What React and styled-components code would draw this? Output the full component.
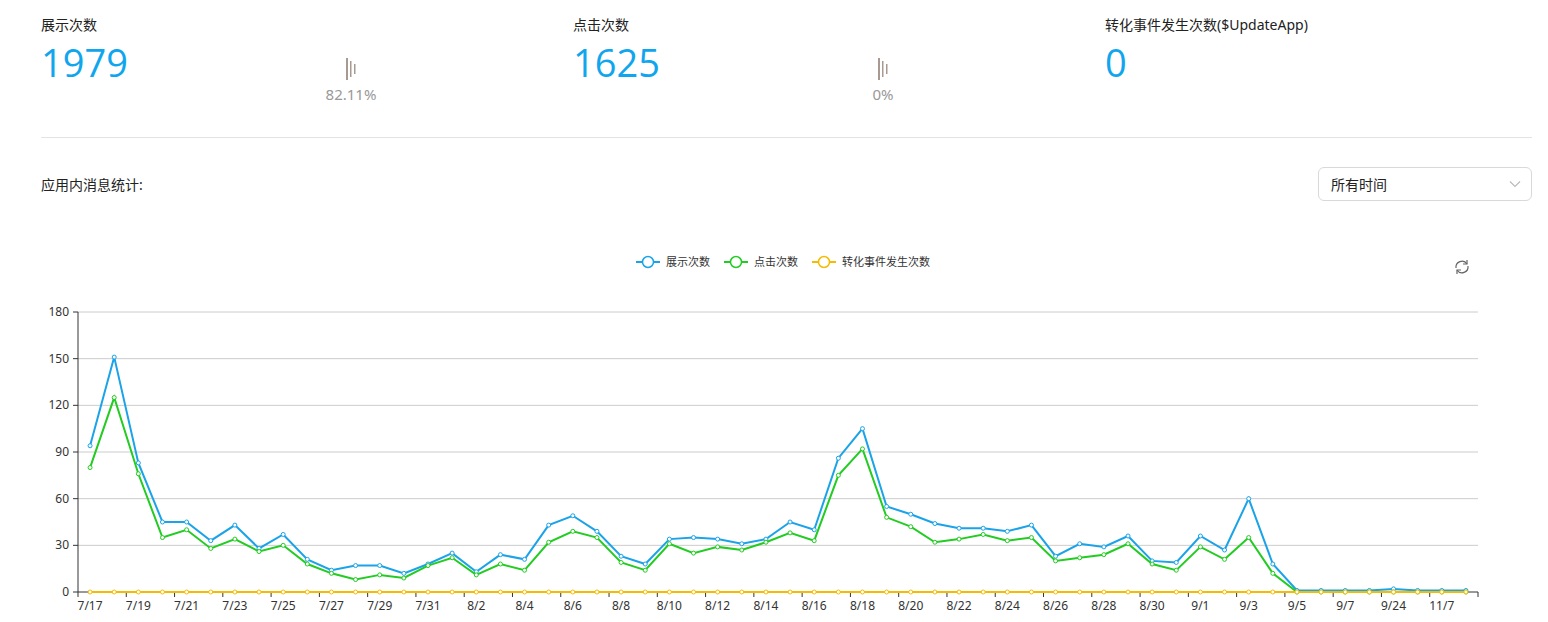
import React from "react";
import styled, { createGlobalStyle } from "styled-components";

const Global = createGlobalStyle`
  body { margin: 0; background: #fff; font-family: "Noto Sans", "Noto Sans CJK SC", sans-serif; color: #333; }
`;
const Page = styled.div`width: 1491px; padding-left: 41px;`;
const Stats = styled.div`display: grid; grid-template-columns: 532px 532px 1fr; padding-top: 14px; height: 123px; border-bottom: 1px solid #e3e3e3;`;
const Stat = styled.div`position: relative;`;
const Label = styled.div`font-size: 14px; line-height: 22px; color: #222;`;
const Num = styled.div`font-size: 38px; line-height: 52px; color: #0fa6ee; font-family: "Open Sans", sans-serif;`;
const Ratio = styled.div`position: absolute; left: 270px; top: 44px; width: 80px; display: flex; flex-direction: column; align-items: center; color: #999; font-size: 15px; gap: 4px;`;
const Toolbar = styled.div`display: flex; justify-content: space-between; align-items: center; margin-top: 28px; height: 36px;`;
const Title = styled.div`font-size: 14px; color: #222;`;
const Select = styled.div`width: 214px; height: 34px; border: 1px solid #d9d9d9; border-radius: 6px; display: flex; align-items: center; justify-content: space-between; padding: 0 10px 0 12px; box-sizing: border-box; font-size: 14px; color: #222;`;
const Chart = styled.svg`display: block; margin-top: 37px;`;

const blue = [94,151,83,45,45,33,43,28,37,21,14,17,17,12,18,25,13,24,21,43,49,39,23,18,34,35,34,31,34,45,40,86,105,55,50,44,41,41,39,43,23,31,29,36,20,19,36,27,60,18,1,1,1,1,2,1,1,1];
const green = [80,125,76,35,40,28,34,26,30,18,12,8,11,9,17,22,11,18,14,32,39,35,19,14,31,25,29,27,32,38,33,75,92,48,42,32,34,37,33,35,20,22,24,31,18,14,29,21,35,12,0,0,0,0,0,0,0,0];
const yellow = blue.map(() => 0);
const labels = ["7/17","7/19","7/21","7/23","7/25","7/27","7/29","7/31","8/2","8/4","8/6","8/8","8/10","8/12","8/14","8/16","8/18","8/20","8/22","8/24","8/26","8/28","8/30","9/1","9/3","9/5","9/7","9/24","11/7"];
const X0 = 78, X1 = 1478, N = 58, step = (X1 - X0) / N;
const px = (i) => X0 + step * (i + 0.5);
const py = (v) => 593 - v * (280 / 180);

function Series({ data, color }) {
  const pts = data.map((v, i) => `${px(i)},${py(v)}`).join(" ");
  return (
    <g>
      <polyline points={pts} fill="none" stroke={color} strokeWidth="2" />
      {data.map((v, i) => <circle key={i} cx={px(i)} cy={py(v)} r="2" fill="#fff" stroke={color} strokeWidth="1" />)}
    </g>
  );
}

function Bars() {
  return (
    <svg width="14" height="22" viewBox="0 0 14 22">
      <rect x="2" y="0" width="2" height="22" fill="#a89a90" />
      <rect x="6" y="3" width="1.5" height="16" fill="#a89a90" />
      <rect x="10" y="6" width="1.5" height="10" fill="#a89a90" />
    </svg>
  );
}

function Legend({ x, color, text }) {
  return (
    <g>
      <line x1={x} x2={x + 24} y1="263" y2="263" stroke={color} strokeWidth="2" />
      <circle cx={x + 12} cy="263" r="5.5" fill="#fff" stroke={color} strokeWidth="1.5" />
      <text x={x + 30} y="267" fontSize="11" fill="#333">{text}</text>
    </g>
  );
}

export default function App() {
  return (
    <Page>
      <Global />
      <Stats>
        <Stat>
          <Label>展示次数</Label>
          <Num>1979</Num>
          <Ratio><Bars />82.11%</Ratio>
        </Stat>
        <Stat>
          <Label>点击次数</Label>
          <Num>1625</Num>
          <Ratio><Bars />0%</Ratio>
        </Stat>
        <Stat>
          <Label>转化事件发生次数($UpdateApp)</Label>
          <Num>0</Num>
        </Stat>
      </Stats>
      <Toolbar>
        <Title>应用内消息统计:</Title>
        <Select>所有时间
          <svg width="12" height="8" viewBox="0 0 12 8"><path d="M1 1.5l5 5 5-5" fill="none" stroke="#bbb" strokeWidth="1.2" /></svg>
        </Select>
      </Toolbar>
      <Chart width="1491" height="382" viewBox="41 240 1491 382">
        <Legend x={636} color="#1aa3e8" text="展示次数" />
        <Legend x={724} color="#22cc22" text="点击次数" />
        <Legend x={812} color="#f5bb00" text="转化事件发生次数" />
        <g transform="translate(1462 268)" fill="none" stroke="#666" strokeWidth="1.2">
          <path d="M-6 1 A6 6 0 0 1 5 -3" />
          <path d="M6 -1 A6 6 0 0 1 -5 3" />
          <path d="M5 -7 L5 -3 L1 -3" />
          <path d="M-5 7 L-5 3 L-1 3" />
        </g>
        {[0, 30, 60, 90, 120, 150, 180].map((v) => (
          <g key={v}>
            {v > 0 && <line x1={X0} x2={X1} y1={py(v)} y2={py(v)} stroke="#ccc" strokeWidth="1" />}
            <line x1={X0 - 5} x2={X0} y1={py(v)} y2={py(v)} stroke="#333" />
            <text x={X0 - 9} y={py(v) + 4} fontSize="12" textAnchor="end" fill="#333">{v}</text>
          </g>
        ))}
        <line x1={X0} x2={X0} y1={313} y2={593} stroke="#333" />
        <line x1={X0} x2={X1} y1={593} y2={593} stroke="#333" />
        {Array.from({ length: 30 }, (_, k) => (
          <line key={k} x1={X0 + step * 2 * k} x2={X0 + step * 2 * k} y1={593} y2={598} stroke="#333" />
        ))}
        {labels.map((l, k) => (
          <text key={l} x={px(2 * k)} y={611} fontSize="12" textAnchor="middle" fill="#333">{l}</text>
        ))}
        <Series data={blue} color="#1aa3e8" />
        <Series data={green} color="#22cc22" />
        <Series data={yellow} color="#f5bb00" />
      </Chart>
    </Page>
  );
}
